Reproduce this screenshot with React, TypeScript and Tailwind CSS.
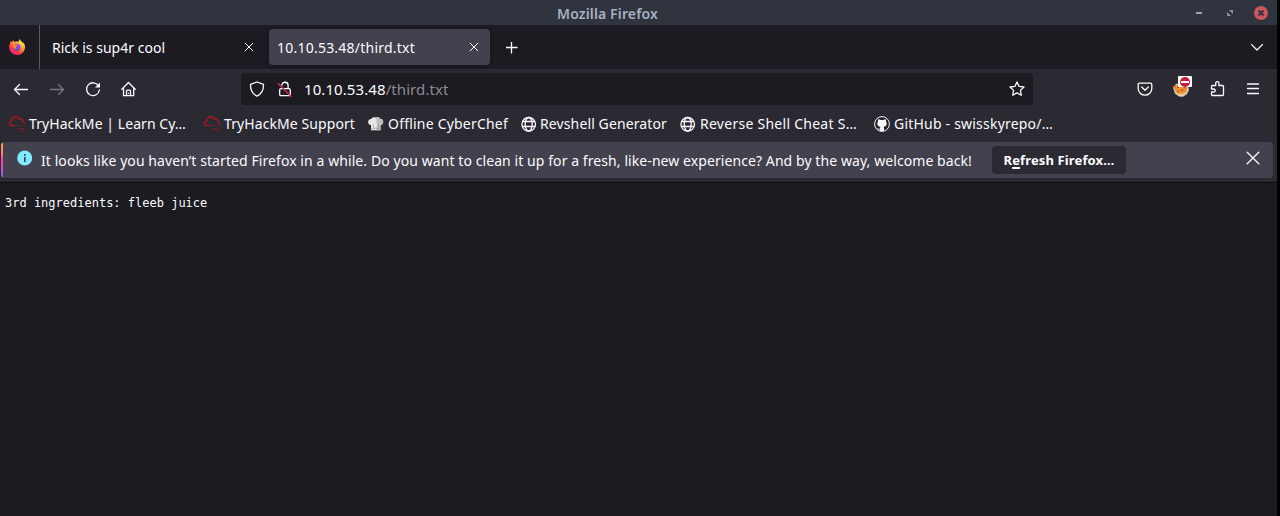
import type { ReactNode } from "react";

const stroke = {
  fill: "none",
  stroke: "currentColor",
  strokeWidth: 1.3,
  strokeLinecap: "round" as const,
  strokeLinejoin: "round" as const,
};

function Icon({ children, className = "" }: { children: ReactNode; className?: string }) {
  return (
    <svg viewBox="0 0 16 16" className={`size-4 shrink-0 ${className}`} {...stroke}>
      {children}
    </svg>
  );
}

function FirefoxLogo() {
  return (
    <svg viewBox="0 0 16 16" className="size-4 shrink-0">
      <defs>
        <linearGradient id="fox" x1="0.85" y1="0.05" x2="0.2" y2="0.95">
          <stop offset="0.1" stopColor="#fff04a" />
          <stop offset="0.4" stopColor="#ff9a2c" />
          <stop offset="0.7" stopColor="#ff4040" />
          <stop offset="1" stopColor="#f0148c" />
        </linearGradient>
        <linearGradient id="globe" x1="0.7" y1="0" x2="0.3" y2="1">
          <stop offset="0" stopColor="#a04bff" />
          <stop offset="1" stopColor="#5b48c8" />
        </linearGradient>
      </defs>
      <path
        fill="url(#fox)"
        d="M10.5 0c-.7 1-.7 2-.3 2.800C9 2.400 7 2.300 6 3 5 2.600 4.400 2 4.100 1.200 3.300 1.800 3 2.500 3 3.200L1.700 2.100C1.600 3 1 4 .6 5.300.2 6.400 0 7.300.1 8.500A7.900 7.600 0 0 0 8 16c4.500 0 8-3.500 8-7.800 0-2-.7-3.900-1.800-5 .1.500.1 1 .1 1.200C13 2.500 11 1.700 10.500 0Z"
      />
      <circle cx="8" cy="8.300" r="3.500" fill="url(#globe)" />
      <path fill="#ff8a2c" d="M3.500 5.500c1.200-.7 2.400-.4 3 .3l2.200.3c-.1.900-1.500 1-1.900 1.500-.2.900.3 1.300 1.200 1.500-1.300 1-3 .6-3.500-.4-.5-1-.4-2-1-3.200Z" />
    </svg>
  );
}

function CloudMark() {
  return (
    <svg viewBox="0 0 16 16" className="size-4 shrink-0" fill="none" stroke="#c0141a" strokeWidth="1.200">
      <path d="M6.500 9.500H2.700C1.300 9.500.5 8.500.5 7.300c0-1.200.9-2.200 2.300-2.300C2.700 2.300 4.500.6 6.700.6c1.700 0 3 .9 3.600 2.500 2-.5 3.600.6 3.700 2.400 1 .3 1.500 1 1.500 2" />
      <path d="M7.500 9.500h2M11 9.500h1.500M14 9h2M9 12.500h3M13.500 12.500h1.500M11.500 15h3" stroke="#8f1a20" />
    </svg>
  );
}

function ChefHat() {
  return (
    <svg viewBox="0 0 16 16" className="size-4 shrink-0">
      <path fill="#e6e6e6" d="M3 9C1 8.800 0 7.500.2 5.700.3 4 1.500 2.900 3.200 3 4 1.500 5.500 1 7 1.500c2-1 4.300-.5 5 1.200 2-.1 3.200 1.200 3.200 3 0 1.800-1 3-2.700 3.300v5.300H3Z" />
      <path fill="#bdbdbd" d="M8 1.300c2-.7 3.500 0 4 1.400 2-.1 3.200 1.200 3.200 3 0 1.800-1 3-2.700 3.300v5.300H8l1-5Z" />
      <path stroke="#999" strokeWidth=".7" d="M5.500 8.500v3M10.500 8.500v3M3 12.300h9.500" />
    </svg>
  );
}

function Globe() {
  return (
    <svg viewBox="0 0 16 16" className="size-4 shrink-0" fill="none" stroke="#fbfbfe" strokeWidth="1.300">
      <circle cx="7.700" cy="8.300" r="6.800" />
      <ellipse cx="7.700" cy="8.300" rx="3.500" ry="6.800" />
      <path d="M1.500 5.500h12.400M1.500 10.500h12.400" />
    </svg>
  );
}

function GitHubMark() {
  return (
    <svg viewBox="0 0 16 16" className="size-4 shrink-0">
      <circle cx="8" cy="8" r="7.400" fill="#24232a" stroke="#f4f4f6" strokeWidth="1" />
      <path
        fill="#f8f8fa"
        d="M4.200 3.200c.9 0 1.700.5 2.200.9a7 7 0 0 1 3.200 0c.5-.4 1.300-.9 2.200-.9.300.8.300 1.500.1 2 .6.700.8 1.400.8 2.300 0 2.400-1.500 3.200-3.200 3.400.4.400.6.900.6 1.600v2.700H5.900v-1.700c-1.700.4-2.200-.8-2.900-1.500 1.300-.1 1.500 1.200 2.900.7 0-.8.200-1.400.6-1.800-1.700-.2-3.200-1-3.200-3.400 0-.9.300-1.600.8-2.300-.2-.5-.2-1.200.1-2Z"
      />
    </svg>
  );
}

function CookieBlocker() {
  return (
    <div className="relative size-4 shrink-0">
      <svg viewBox="0 0 16 16" className="size-4">
        <path fill="#d8d2c8" d="M0 6.500 3 3l5-1 7 3 1 4-2 4-4 2.700-4-.2-4-3Z" />
        <ellipse cx="8" cy="8" rx="6.300" ry="5.500" fill="#ef922f" />
        <path fill="none" stroke="#8b4d20" d="m4 6 2 .5M7.500 9h3M4 10l2 1M11 7l1.500-.5" />
        <path fill="none" stroke="#f9c27a" d="M2.500 10.500c2 3.200 7.500 4 10.500 1" />
        <path fill="#e9772c" d="m0 6 3-2v4Z" />
      </svg>
      <div className="absolute -top-[5px] left-[5px] flex h-[11px] w-3.5 items-center justify-center rounded-[1px] bg-white">
        <svg viewBox="0 0 10 10" className="size-2.5">
          <circle cx="5" cy="5" r="5" fill="#c8193c" />
          <path fill="#fff" d="M1 4h8v2H1z" />
        </svg>
      </div>
    </div>
  );
}

function CloseIcon() {
  return (
    <svg viewBox="0 0 8 8" className="size-2 shrink-0 overflow-visible" {...stroke} strokeWidth={1}>
      <path d="m.2.200 7.600 7.600M7.800.2.2 7.800" />
    </svg>
  );
}

function TitleBar() {
  return (
    <header className="flex h-[25px] items-center bg-[#2f343f] text-[#a9b1bf]">
      <div className="w-[1196px] pt-0.5 pl-[557px] text-sm leading-5 font-semibold tracking-[0.14px]">Mozilla Firefox</div>
      <div className="h-[2px] w-1.5 bg-[#a0a4ad]" />
      <svg viewBox="0 0 6 6" className="ml-[25px] size-1.5" fill="#8d929c">
        <path d="M2 0h4v4ZM0 2v4h4Z" />
      </svg>
      <svg viewBox="0 0 14 14" className="ml-[21px] size-3.5">
        <circle cx="7" cy="7" r="7" fill="#cc575d" />
        <path d="m4.500 4.500 5 5M9.500 4.500l-5 5" stroke="#2f343f" strokeWidth="1.900" />
      </svg>
    </header>
  );
}

function TabStrip() {
  return (
    <div className="flex h-11 items-center bg-[#1c1b22]">
      <div className="flex h-full w-10 items-center border-r border-[#5b5a62] pl-[9px]">
        <FirefoxLogo />
      </div>
      <div className="flex h-9 w-[229px] items-center justify-between pr-4 pl-3">
        <span className="pt-0.5 tracking-[0.012px]">Rick is sup4r cool</span>
        <CloseIcon />
      </div>
      <div className="flex h-9 w-[221px] items-center justify-between rounded bg-[#42414d] pr-3 pl-2 shadow-[0_0_3px_rgba(0,0,0,0.4)]">
        <span className="pt-0.5 tracking-[0.227px]">10.10.53.48/third.txt</span>
        <CloseIcon />
      </div>
      <svg viewBox="0 0 12 12" className="mt-px ml-4 size-3" {...stroke}>
        <path d="M5.500 0v11M0 5.500h11" />
      </svg>
      <svg viewBox="0 0 12 7" className="mr-3.5 ml-auto h-[7px] w-3" {...stroke}>
        <path d="m.6.6 5.400 5.400L11.400.6" />
      </svg>
    </div>
  );
}

function NavBar() {
  return (
    <div className="flex h-10 items-center">
      <div className="flex w-[241px] gap-5 pl-[13px]">
        <Icon>
          <path d="M14.500 8.500H1.500M6.500 3.500l-5 5 5 5" />
        </Icon>
        <Icon className="text-[#77767e]">
          <path d="M1.500 8.500h13M9.500 3.500l5 5-5 5" />
        </Icon>
        <Icon>
          <path d="M13.500 4.800A6.400 6.400 0 1 0 14.400 9" />
          <path fill="currentColor" stroke="none" d="M15 1.500v5H10Z" />
        </Icon>
        <Icon>
          <path d="M.8 8.300 7.500 1.500l6.700 6.800M2.500 7v7.700h10.200V7M5.500 14.500V10c0-.6.300-.9.900-.9h2.200c.6 0 .9.300.9.900v4.500M7.500 12.300v.2" />
        </Icon>
      </div>
      <div className="flex h-8 w-[792px] items-center rounded bg-[#1c1b22] px-2">
        <Icon>
          <path d="M8 1 14.500 3.300C14.700 8.800 12.500 13 8 15.200 3.500 13 1.300 8.800 1.500 3.300Z" />
        </Icon>
        <Icon className="ml-3">
          <path d="M4 7.700h8c.8 0 1.300.5 1.300 1.300v4.400c0 .8-.5 1.300-1.300 1.300H4c-.8 0-1.300-.5-1.300-1.300V9c0-.8.500-1.300 1.300-1.300ZM4.900 4.200a3.100 3.100 0 0 1 6.200.3v3" />
          <path stroke="#e22850" d="m1.200 2.500 13 13" />
        </Icon>
        <span className="ml-[11px] text-[15px] tracking-[0.084px]">
          10.10.53.48<span className="text-[#8c8b92]">/third.txt</span>
        </span>
        <Icon className="ml-auto">
          <path d="m8 .9 2.100 4.500 4.900.6-3.600 3.400.9 4.900L8 11.900l-4.300 2.400.9-4.900L1 6l4.900-.6Z" />
        </Icon>
      </div>
      <div className="flex gap-5 pl-[104px]">
        <Icon>
          <path d="M2.400 2.200h11.200c.7 0 1.200.5 1.200 1.200v4A6.800 6.800 0 0 1 1.200 7.400v-4c0-.7.500-1.200 1.200-1.200ZM4.700 6 8 9.200 11.300 6" />
        </Icon>
        <CookieBlocker />
        <Icon>
          <path d="M2.500 8V5.500c0-.6.400-1 1-1h3.200V2.200a1.600 1.600 0 0 1 3.200 0v2.300h3.600c.6 0 1 .4 1 1v8c0 .6-.4 1-1 1h-10c-.6 0-1-.4-1-1V11h2.300a1.500 1.500 0 0 0 0-3Z" />
        </Icon>
        <Icon>
          <path d="M2.500 3h11M2.500 7.500h11M2.500 12.500h11" />
        </Icon>
      </div>
    </div>
  );
}

function BookmarksBar() {
  return (
    <div className="flex h-[33px] items-center pb-[3px] pl-[9px]">
      <div className="flex w-[195px] items-center gap-1">
        <CloudMark />
        <span className="tracking-[0.063px]">TryHackMe | Learn Cy…</span>
      </div>
      <div className="flex w-[164px] items-center gap-1">
        <CloudMark />
        <span className="tracking-[0.087px]">TryHackMe Support</span>
      </div>
      <div className="flex w-[153px] items-center gap-1">
        <ChefHat />
        <span className="tracking-[0.208px]">Offline CyberChef</span>
      </div>
      <div className="flex w-[159px] items-center gap-[3px]">
        <Globe />
        <span className="tracking-[0.119px]">Revshell Generator</span>
      </div>
      <div className="flex w-[194px] items-center gap-1">
        <Globe />
        <span className="tracking-[0.266px]">Reverse Shell Cheat S…</span>
      </div>
      <div className="flex items-center gap-1">
        <GitHubMark />
        <span className="tracking-[0.209px]">GitHub - swisskyrepo/…</span>
      </div>
    </div>
  );
}

function Notification() {
  return (
    <div className="mr-1 ml-px flex h-9 items-center overflow-hidden rounded bg-[#42414d]">
      <div className="h-full w-0.5 bg-linear-to-b from-[#ffb13d] via-[#ff3d9a] to-[#9059ff]" />
      <svg viewBox="0 0 16 16" className="mb-1 ml-[14px] size-4">
        <circle cx="7.700" cy="8" r="7.500" fill="#80ebff" />
        <path fill="#42414d" d="M7 4h1.700v1.700H7ZM7 7h1.700v5H7Z" />
      </svg>
      <span className="ml-2 w-[951px] pt-px tracking-[0.079px]">
        It looks like you haven’t started Firefox in a while. Do you want to clean it up for a fresh, like-new experience? And by the way, welcome back!
      </span>
      <button className="h-7 w-[134px] rounded bg-[#2b2a33] text-center text-[13px] font-bold tracking-[0.134px]">
        R<span className="underline decoration-2 underline-offset-2">e</span>fresh Firefox…
      </button>
      <svg viewBox="0 0 12 12" className="mr-3.5 mb-1 ml-auto size-3 overflow-visible" {...stroke}>
        <path d="m.2.200 11.600 11.600M11.800.2.2 11.800" />
      </svg>
    </div>
  );
}

export default function App() {
  return (
    <div className="h-[516px] w-[1280px] overflow-hidden bg-black pr-[3px] font-['Noto_Sans',sans-serif]">
      <div className="flex h-full flex-col text-sm leading-5 whitespace-nowrap text-[#fbfbfe]">
        <TitleBar />
        <TabStrip />
        <div className="h-[114px] border-b border-[#0c0c0d] bg-[#2b2a33]">
          <NavBar />
          <BookmarksBar />
          <Notification />
        </div>
        <main className="flex-1 bg-[#1c1b22] px-[5px] pt-3">
          <pre className="font-['DejaVu_Sans_Mono',monospace] text-xs leading-4">3rd ingredients: fleeb juice</pre>
        </main>
      </div>
    </div>
  );
}
